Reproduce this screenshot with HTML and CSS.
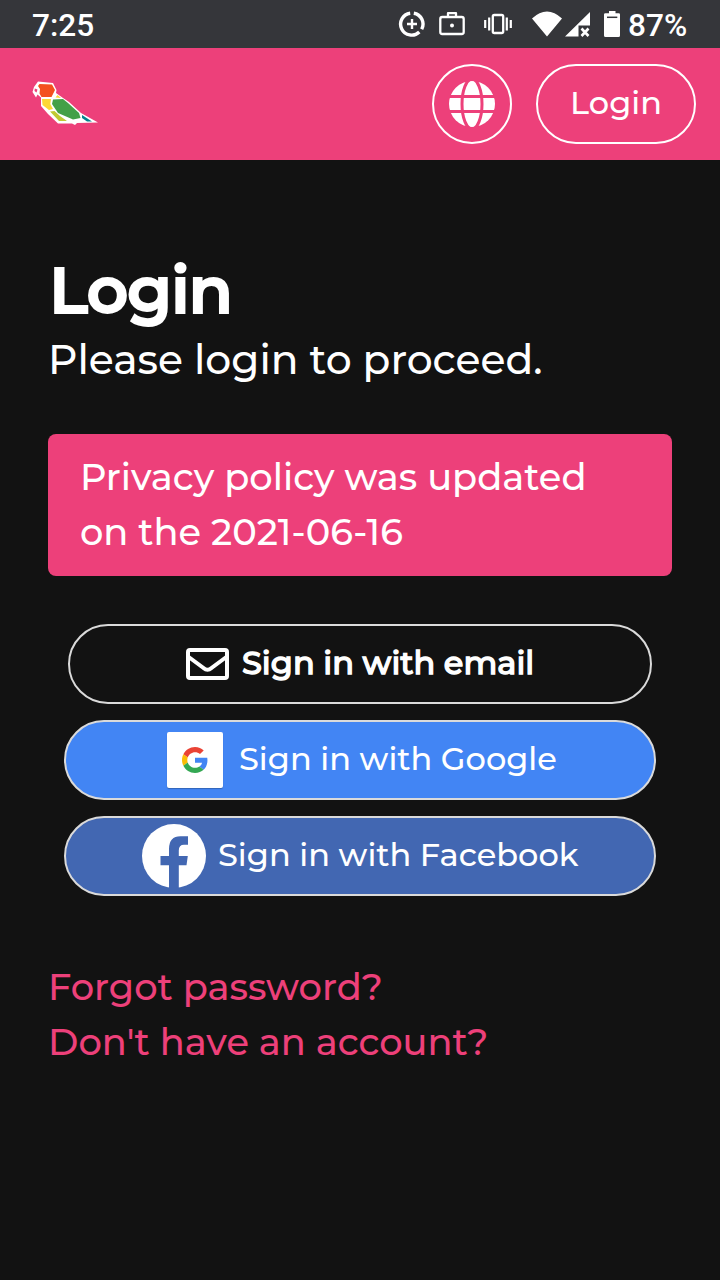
FILE: index.html
```
<!DOCTYPE html>
<html lang="en">
<head>
<meta charset="utf-8">
<title>Login</title>
<link rel="stylesheet" href="styles.css">
</head>
<body>
<div class="status">
  <span class="clock">7:25</span>
  <svg class="status-icons" width="234" height="48" viewBox="390 0 234 48" fill="#fff">
    <g fill="none" stroke="#fff">
      <path d="M413.8 13.2A11 11 0 0 1 421.7 29.3M419.3 32A11 11 0 1 1 410.2 13.2" stroke-width="3.4"/>
      <path d="M412 19v10M407 24h10" stroke-width="2.4"/>
      <rect x="440.3" y="17" width="23.4" height="17" rx="2" stroke-width="2.3"/>
      <path d="M448 17v-3.8h8V17" stroke-width="2.3" stroke-linejoin="round"/>
      <rect x="492.8" y="15" width="10.4" height="18" rx="1.5" stroke-width="2.3"/>
      <path d="M489.2 17.5v13M485.2 20v8M506.8 17.5v13M510.8 20v8" stroke-width="2.2"/>
    </g>
    <circle cx="452" cy="25.6" r="2"/>
    <path d="M532 18.5Q547 4.500 562 18.500L547 36.500ZM565 36.500L590 12V25.500H578.500V36.500Z"/>
    <path d="M581.500 28.500l7 7.500M588.500 28.500l-7 7.500" fill="none" stroke="#fff" stroke-width="2.600"/>
    <path d="M609 11h6.500v2.200h3.200q1.300 0 1.300 1.300v21q0 1.500-1.500 1.500h-13q-1.500 0-1.500-1.500v-21q0-1.300 1.300-1.300h3.700Z"/>
    <path d="M607 17.300h10.300" stroke="#35363a" stroke-width="1.500"/>
  </svg>
  <span class="battery">87%</span>
</div>
<header class="topbar">
  <svg class="bird" width="70" height="46" viewBox="30 80 70 46">
    <path d="M38 81.500L53 83 56.500 90 56 93 63 98 69 102 81 113 98 122.500 77 123 75 125 72 123.500H58L48 114 41 106V97.500L37.500 94.500 36 97.500 32.500 92 34 87Z" fill="#fff"/>
    <path d="M39.500 84L52 84.500 55 90 51.500 97H41.500L39.500 93.500 40 89 38 86Z" fill="#f4511e"/>
    <path d="M34.800 88.500L37.500 89.500 36.500 92.500 34.500 91Z" fill="#ed407a"/>
    <path d="M42 99H51L50.300 104 53 109 49 110 42.500 105ZM55.500 97.500L57.500 95 61 98Z" fill="#fdd835"/>
    <path d="M53 99.500L63 99 68 103 79 113 80.500 118 73 119.500 58 113 52 104Z" fill="#43a047"/>
    <path d="M50 111.500L54.500 111 60 116 67 121H59Z" fill="#c0ca33"/>
    <path d="M82 115L92 121.500 87 121.500 82 118Z" fill="#00838f"/>
  </svg>
  <button class="language" aria-label="Language">
    <svg width="46" height="46" viewBox="0 0 46 46">
      <circle cx="23" cy="23" r="23" fill="#fff"/>
      <g fill="none" stroke="#ed407a" stroke-width="3"><path d="M0 15.500H46M0 30.500H46"/><ellipse cx="23" cy="23" rx="10" ry="25"/></g>
    </svg>
  </button>
  <button class="header-login">Login</button>
</header>
<main>
  <h1>Login</h1>
  <p class="lead">Please login to proceed.</p>
  <div class="notice">Privacy policy was updated<br>on the 2021-06-16</div>
  <div class="providers">
    <button class="provider email">
      <svg width="44" height="32" viewBox="0 0 44 32" fill="none" stroke="#fff" stroke-width="4"><rect x="2" y="2" width="39" height="28" rx="2"/><path d="M2 8.500L17.500 20Q21.500 23.500 25.500 20L41 8.500"/></svg>
      <span>Sign in with email</span>
    </button>
    <button class="provider google">
      <i class="tile"><svg width="26" height="26" viewBox="0 0 48 48"><path fill="#EA4335" d="M24 9.500c3.540 0 6.710 1.220 9.210 3.600l6.850-6.850C35.900 2.380 30.470 0 24 0 14.620 0 6.510 5.380 2.560 13.220l7.980 6.190C12.430 13.720 17.740 9.500 24 9.500z"/><path fill="#4285F4" d="M46.980 24.550c0-1.570-.15-3.090-.38-4.550H24v9.020h12.940c-.58 2.960-2.260 5.480-4.780 7.180l7.730 6c4.510-4.180 7.090-10.360 7.090-17.650z"/><path fill="#FBBC05" d="M10.530 28.590c-.48-1.450-.76-2.990-.76-4.590s.27-3.140.76-4.590l-7.980-6.190C.92 16.460 0 20.120 0 24s.92 7.540 2.560 10.780l7.970-6.190z"/><path fill="#34A853" d="M24 48c6.480 0 11.930-2.130 15.890-5.810l-7.730-6c-2.150 1.450-4.920 2.300-8.160 2.300-6.260 0-11.570-4.220-13.470-9.910l-7.980 6.190C6.510 42.620 14.620 48 24 48z"/></svg></i>
      <span>Sign in with Google</span>
    </button>
    <button class="provider facebook">
      <svg width="64" height="64" viewBox="0 0 64 64"><circle cx="32" cy="32" r="32" fill="#fff"/><path d="M27 64V41.300H18.500V32H27V25Q27 12.200 38.500 12.200H46V20.800H42Q36.800 20.800 36.800 26.500V32H45.800L44.500 41.300H36.800V64Z" fill="#4267b2"/></svg>
      <span>Sign in with Facebook</span>
    </button>
  </div>
  <nav class="links"><a href="#">Forgot password?</a><a href="#">Don't have an account?</a></nav>
</main>
</body>
</html>
```
FILE: styles.css
```
* { box-sizing: border-box; }
body { margin: 0; min-height: 1280px; background: #121212; color: #fff; font-family: Montserrat, Inter, "Open Sans", sans-serif; font-weight: 500; }
button { margin: 0; padding: 0; background: none; color: #fff; font: inherit; white-space: nowrap; }
svg { display: block; flex: none; }
.status { display: flex; align-items: center; height: 48px; padding: 2px 0 0 32px; background: #35363a; font: 500 31.6px/46px Roboto, sans-serif; }
.status-icons { margin: -2px 4px 0 auto; }
.clock { width: 70px; padding-top: 1px; }
.battery { width: 92px; padding-top: 1px; }
.topbar { display: flex; align-items: center; height: 112px; padding: 0 24px 0 30px; background: #ed407a; }
.bird { margin: -2px auto 0 0; }
.language { display: flex; align-items: center; justify-content: center; width: 80px; height: 80px; margin-right: 24px; border: 2px solid #fff; border-radius: 50%; }
.header-login { width: 160px; height: 80px; padding-bottom: 4px; border: 2px solid #fff; border-radius: 40px; font-size: 32px; }
main { padding: 90px 48px 0; }
h1 { margin: 0; padding-left: 1px; font-size: 65px; line-height: 80px; font-weight: 600; letter-spacing: -1.2px; -webkit-text-stroke: 1.8px #fff; }
.lead { margin: 0; font-size: 40.8px; line-height: 59px; padding-bottom: 1px; white-space: nowrap; }
.notice { height: 142px; margin-top: 44px; padding: 15px 32px 17px; border-radius: 8px; background: #ed407a; font-size: 36.8px; line-height: 55px; white-space: nowrap; }
.providers { display: flex; flex-direction: column; gap: 16px; margin-top: 48px; padding: 0 16px; }
.provider { display: flex; align-items: center; height: 80px; border: 2px solid #dadada; border-radius: 40px; font-size: 32px; }
.provider span { padding-bottom: 3px; }
.email { margin: 0 4px; padding-left: 116px; gap: 12px; -webkit-text-stroke: 1.3px #fff; }
.provider.email span { padding-bottom: 4px; }
.google { padding-left: 101px; gap: 16px; background: #4285f4; }
.tile { display: flex; align-items: center; justify-content: center; width: 56px; height: 56px; border-radius: 2px; background: #fff; box-shadow: 0 1px 1px rgba(0,0,0,.25); }
.facebook { padding-left: 76px; gap: 12px; background: #4267b2; }
.links { display: flex; flex-direction: column; align-items: flex-start; margin-top: 63px; font-size: 36.8px; line-height: 55px; white-space: nowrap; }
.links a { color: #ed407a; text-decoration: none; }
```
